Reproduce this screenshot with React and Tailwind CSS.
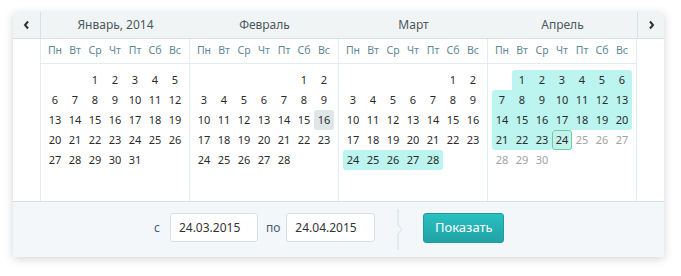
import React from 'react';

const weekdays = ['Пн', 'Вт', 'Ср', 'Чт', 'Пт', 'Сб', 'Вс'];

const months = [
  { title: 'Январь, 2014', offset: 2, days: 31 },
  { title: 'Февраль', offset: 5, days: 28 },
  { title: 'Март', offset: 5, days: 28 },
  { title: 'Апрель', offset: 1, days: 30 },
];

// range highlight: March 24-28, April 1-23, April 24 is the end date
function inRange(m, d) {
  if (m === 2) return d >= 24 && d <= 28;
  if (m === 3) return d >= 1 && d <= 23;
  return false;
}

function Chevron({ dir }) {
  return (
    <svg width="7" height="10" viewBox="0 0 7 10">
      <polyline
        points={dir === 'left' ? '5,1.5 2,5 5,8.5' : '2,1.5 5,5 2,8.5'}
        fill="none"
        stroke="#2f3336"
        strokeWidth="2"
      />
    </svg>
  );
}

function DayCell({ m, d, offset, days }) {
  const idx = offset + d - 1;
  const col = idx % 7;
  const has = (day, ok) => ok && day >= 1 && day <= days && inRange(m, day);

  if (m === 3 && d === 24) {
    return (
      <div className="h-[20px] flex items-center justify-center bg-[#c3f2eb] border border-[#6bcfa6] rounded-[3px] text-[#2b2b2b]">
        {d}
      </div>
    );
  }
  if (m === 1 && d === 16) {
    return (
      <div className="h-[20px] flex items-center justify-center bg-[#dfe6e8] rounded-[3px] text-[#2b2b2b]">
        {d}
      </div>
    );
  }

  const disabled = m === 3 && d > 24;
  if (!inRange(m, d)) {
    return (
      <div
        className={`h-[20px] flex items-center justify-center ${
          disabled ? 'text-[#a3a3a3]' : 'text-[#2b2b2b]'
        }`}
      >
        {d}
      </div>
    );
  }

  const up = has(d - 7, true);
  const down = has(d + 7, true);
  const left = has(d - 1, col > 0);
  const right = has(d + 1, col < 6);

  return (
    <div
      className={`h-[20px] flex items-center justify-center bg-[#bcf4ef] text-[#2b2b2b] ${
        !up && !left ? 'rounded-tl-[3px]' : ''
      } ${!up && !right ? 'rounded-tr-[3px]' : ''} ${
        !down && !left ? 'rounded-bl-[3px]' : ''
      } ${!down && !right ? 'rounded-br-[3px]' : ''}`}
    >
      {d}
    </div>
  );
}

function MonthBody({ month, m }) {
  const blanks = Array.from({ length: month.offset });
  const days = Array.from({ length: month.days }, (_, i) => i + 1);
  return (
    <div className="w-[149px] border-r border-[#e3ecef] flex flex-col">
      <div className="h-[25px] border-b border-[#e3ecef] flex justify-center">
        <div className="w-[140px] grid grid-cols-7 items-center text-[10.5px] text-[#5c8796]">
          {weekdays.map((w) => (
            <div key={w} className="text-center">
              {w}
            </div>
          ))}
        </div>
      </div>
      <div className="flex justify-center pt-[6px]">
        <div className="w-[140px] grid grid-cols-7 text-[11px]">
          {blanks.map((_, i) => (
            <div key={'b' + i} className="h-[20px]" />
          ))}
          {days.map((d) => (
            <DayCell key={d} m={m} d={d} offset={month.offset} days={month.days} />
          ))}
        </div>
      </div>
    </div>
  );
}

export default function App() {
  return (
    <div
      className="w-[681px] h-[276px] bg-white pt-[12px] pl-[13px]"
      style={{ fontFamily: '"Noto Sans", "Open Sans", sans-serif' }}
    >
      <div className="w-[651px] rounded-[3px] bg-white shadow-[0_2px_10px_rgba(0,0,0,0.17)] overflow-hidden">
        {/* header */}
        <div className="h-[27px] flex bg-[#f1f4f5] border-b border-[#d4e2e6]">
          <button className="w-[28px] border-r border-[#d4e2e6] flex items-center justify-center">
            <Chevron dir="left" />
          </button>
          {months.map((mo) => (
            <div
              key={mo.title}
              className="w-[149px] flex items-center justify-center text-[12px] text-[#4b585d]"
            >
              {mo.title}
            </div>
          ))}
          <button className="w-[27px] border-l border-[#d4e2e6] flex items-center justify-center">
            <Chevron dir="right" />
          </button>
        </div>

        {/* months */}
        <div className="h-[162px] flex">
          <div className="w-[28px] border-r border-[#e3ecef]" />
          {months.map((mo, m) => (
            <MonthBody key={mo.title} month={mo} m={m} />
          ))}
          <div className="w-[27px]" />
        </div>

        {/* footer */}
        <div className="h-[56px] bg-[#f3f7f9] border-t border-[#d4e2e6] flex items-start pt-[11px] pl-[141px]">
          <span className="h-[29px] flex items-center text-[12px] text-[#4a5a6e] mr-[10px]">с</span>
          <div className="w-[88px] h-[29px] bg-white border border-[#d5e0e4] rounded-[3px] flex items-center pl-[8px] text-[12px] text-[#333]">
            24.03.2015
          </div>
          <span className="h-[29px] flex items-center text-[12px] text-[#4a5a6e] ml-[8px] mr-[6px]">по</span>
          <div className="w-[89px] h-[29px] bg-white border border-[#d5e0e4] rounded-[3px] flex items-center pl-[8px] text-[12px] text-[#333]">
            24.04.2015
          </div>
          <svg width="8" height="41" viewBox="0 0 8 41" className="ml-[22px] -mt-[4px]">
            <polyline points="1,0 1,16 5,20.5 1,25 1,41" fill="none" stroke="#cfe0e5" strokeWidth="1" />
          </svg>
          <button className="ml-[18px] w-[81px] h-[30px] rounded-[3px] bg-gradient-to-b from-[#29c0c1] to-[#21a3a4] border border-[#1f9d9e] text-white text-[13px] flex items-center justify-center">
            Показать
          </button>
        </div>
      </div>
    </div>
  );
}
